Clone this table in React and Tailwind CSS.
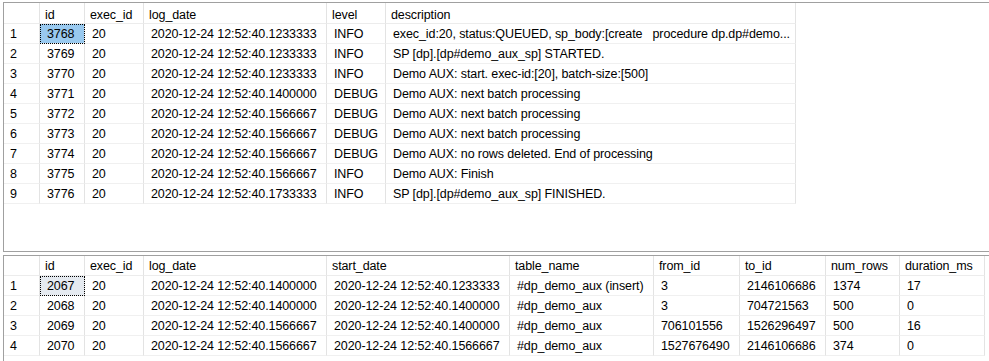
import React from 'react';

const topCols = [
  { key: 'id', label: 'id', w: 'w-[45px]' },
  { key: 'exec', label: 'exec_id', w: 'w-[59px]' },
  { key: 'log', label: 'log_date', w: 'w-[183px]' },
  { key: 'level', label: 'level', w: 'w-[59px]' },
  { key: 'desc', label: 'description', w: 'w-[410px]' },
];

const topRows = [
  ['3768', '20', '2020-12-24 12:52:40.1233333', 'INFO', 'exec_id:20, status:QUEUED, sp_body:[create   procedure dp.dp#demo...'],
  ['3769', '20', '2020-12-24 12:52:40.1233333', 'INFO', 'SP [dp].[dp#demo_aux_sp] STARTED.'],
  ['3770', '20', '2020-12-24 12:52:40.1233333', 'INFO', 'Demo AUX: start. exec-id:[20], batch-size:[500]'],
  ['3771', '20', '2020-12-24 12:52:40.1400000', 'DEBUG', 'Demo AUX: next batch processing'],
  ['3772', '20', '2020-12-24 12:52:40.1566667', 'DEBUG', 'Demo AUX: next batch processing'],
  ['3773', '20', '2020-12-24 12:52:40.1566667', 'DEBUG', 'Demo AUX: next batch processing'],
  ['3774', '20', '2020-12-24 12:52:40.1566667', 'DEBUG', 'Demo AUX: no rows deleted. End of processing'],
  ['3775', '20', '2020-12-24 12:52:40.1566667', 'INFO', 'Demo AUX: Finish'],
  ['3776', '20', '2020-12-24 12:52:40.1733333', 'INFO', 'SP [dp].[dp#demo_aux_sp] FINISHED.'],
];

const bottomCols = [
  { key: 'id', label: 'id', w: 'w-[45px]' },
  { key: 'exec', label: 'exec_id', w: 'w-[59px]' },
  { key: 'log', label: 'log_date', w: 'w-[183px]' },
  { key: 'start', label: 'start_date', w: 'w-[183px]' },
  { key: 'table', label: 'table_name', w: 'w-[144px]' },
  { key: 'from', label: 'from_id', w: 'w-[86px]' },
  { key: 'to', label: 'to_id', w: 'w-[86px]' },
  { key: 'num', label: 'num_rows', w: 'w-[74px]' },
  { key: 'dur', label: 'duration_ms', w: 'w-[85px]' },
];

const bottomRows = [
  ['2067', '20', '2020-12-24 12:52:40.1400000', '2020-12-24 12:52:40.1233333', '#dp_demo_aux (insert)', '3', '2146106686', '1374', '17'],
  ['2068', '20', '2020-12-24 12:52:40.1400000', '2020-12-24 12:52:40.1400000', '#dp_demo_aux', '3', '704721563', '500', '0'],
  ['2069', '20', '2020-12-24 12:52:40.1566667', '2020-12-24 12:52:40.1400000', '#dp_demo_aux', '706101556', '1526296497', '500', '16'],
  ['2070', '20', '2020-12-24 12:52:40.1566667', '2020-12-24 12:52:40.1566667', '#dp_demo_aux', '1527676490', '2146106686', '374', '0'],
];

function Grid({ cols, rows, selectedBg, headerClass }) {
  return (
    <div className="flex flex-col">
      {/* header */}
      <div className="flex">
        <div className={`w-[36px] shrink-0 border-r border-b border-r-[#e3e3e3] border-b-[#ececec] ${headerClass}`} />
        {cols.map((c) => (
          <div
            key={c.key}
            className={`${c.w} shrink-0 border-r border-b border-r-[#e3e3e3] border-b-[#ececec] pl-[5px] whitespace-pre leading-[20px] ${headerClass}`}
          >
            {c.label}
          </div>
        ))}
      </div>
      {rows.map((r, i) => (
        <div key={i} className="flex">
          <div className="w-[36px] h-[20px] shrink-0 border-r border-b border-r-[#e3e3e3] border-b-[#f0f0f0] pl-[6px] leading-[20px]">
            {i + 1}
          </div>
          {cols.map((c, j) => {
            const sel = i === 0 && j === 0;
            return (
              <div
                key={c.key}
                className={`${c.w} h-[20px] shrink-0 border-r border-b border-r-[#e3e3e3] border-b-[#f0f0f0] pl-[7px] leading-[20px] whitespace-pre overflow-hidden ${
                  sel ? `${selectedBg} outline-1 outline-dotted outline-black -outline-offset-1` : ''
                }`}
              >
                {r[j]}
              </div>
            );
          })}
        </div>
      ))}
    </div>
  );
}

export default function App() {
  return (
    <div
      className="w-[989px] h-[361px] bg-white overflow-hidden pt-[2px] text-black text-[12.5px] tracking-[-0.1px]"
      style={{ fontFamily: '"Liberation Sans", Arial, sans-serif' }}
    >
      <div className="ml-[3px] h-[250px] border-t border-l border-b border-[#a0a0a0]">
        <Grid cols={topCols} rows={topRows} selectedBg="bg-[#99c9ef]" headerClass="h-[21px] pt-[2px]" />
      </div>
      <div className="ml-[3px] mt-[3px] h-[120px] border-t border-l border-[#a0a0a0]">
        <Grid cols={bottomCols} rows={bottomRows} selectedBg="bg-[#e5eaf0]" headerClass="h-[20px]" />
      </div>
    </div>
  );
}
